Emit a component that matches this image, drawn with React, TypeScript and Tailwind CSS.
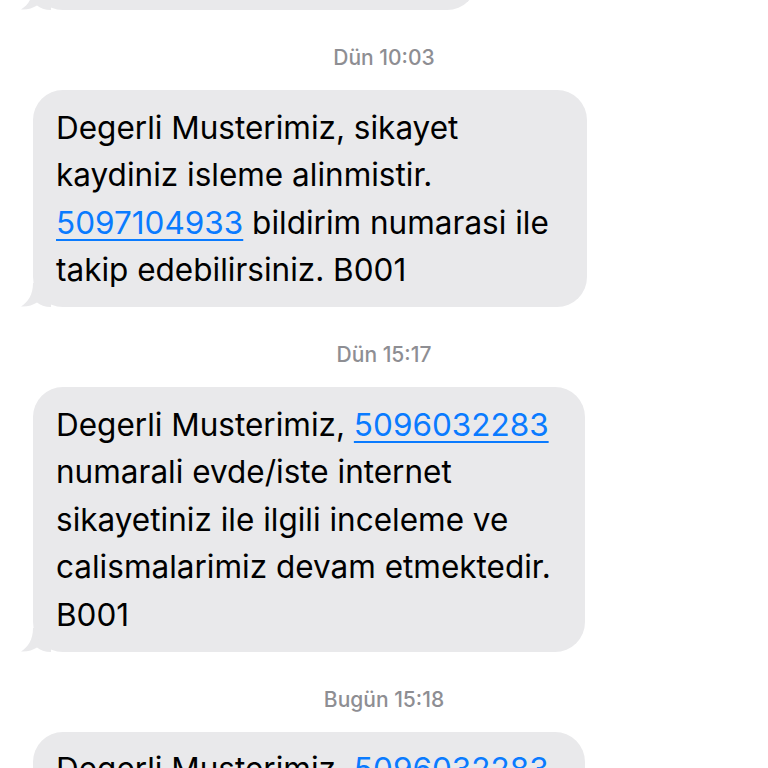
import type { ReactNode } from "react";

function Tail() {
  return (
    <svg
      className="absolute left-[-12px] bottom-0"
      width="30"
      height="24"
      viewBox="0 0 30 24"
    >
      <path
        d="M12 0 C12 12 7 19 0 23.5 C6 24 12 22 16 19.5 C19 22 24 24 30 24 L30 0 Z"
        fill="#e9e9eb"
      />
    </svg>
  );
}

function Bubble({ width, children }: { width: string; children?: ReactNode }) {
  return (
    <div className={`relative ${width}`}>
      <Tail />
      <div className="relative rounded-[30px] bg-[#e9e9eb] px-[23px] py-[13.5px] text-[31.5px] leading-[47.5px] text-black">
        {children}
      </div>
    </div>
  );
}

function Stamp({ day, time }: { day: string; time: string }) {
  return (
    <div className="-ml-[33px] mt-[36px] mb-[20px] text-center text-[21px] leading-[24px] font-medium text-[#8e8e93]">
      {day} {time}
    </div>
  );
}

function Num({ children }: { children: ReactNode }) {
  return (
    <span className="text-[#0a7bff] underline decoration-[1.5px] underline-offset-[5px]">
      {children}
    </span>
  );
}

export default function App() {
  return (
    <div className="h-[768px] w-[768px] overflow-hidden bg-white pl-[33px] font-['Inter',sans-serif]">
      <div className="flex h-[10px] flex-col justify-end">
        <div className="relative w-[444px] shrink-0">
          <Tail />
          <div className="h-[60px] rounded-[30px] bg-[#e9e9eb]" />
        </div>
      </div>

      <Stamp day="Dün" time="10:03" />
      <Bubble width="w-[554px]">
        Degerli Musterimiz, sikayet
        <br />
        kaydiniz isleme alinmistir.
        <br />
        <Num>5097104933</Num> bildirim numarasi ile
        <br />
        takip edebilirsiniz. B001
      </Bubble>

      <Stamp day="Dün" time="15:17" />
      <Bubble width="w-[552px]">
        Degerli Musterimiz, <Num>5096032283</Num>
        <br />
        numarali evde/iste internet
        <br />
        sikayetiniz ile ilgili inceleme ve
        <br />
        calismalarimiz devam etmektedir.
        <br />
        B001
      </Bubble>

      <Stamp day="Bugün" time="15:18" />
      <Bubble width="w-[552px]">
        Degerli Musterimiz, <Num>5096032283</Num>
        <br />
        numarali evde/iste internet
      </Bubble>
    </div>
  );
}
